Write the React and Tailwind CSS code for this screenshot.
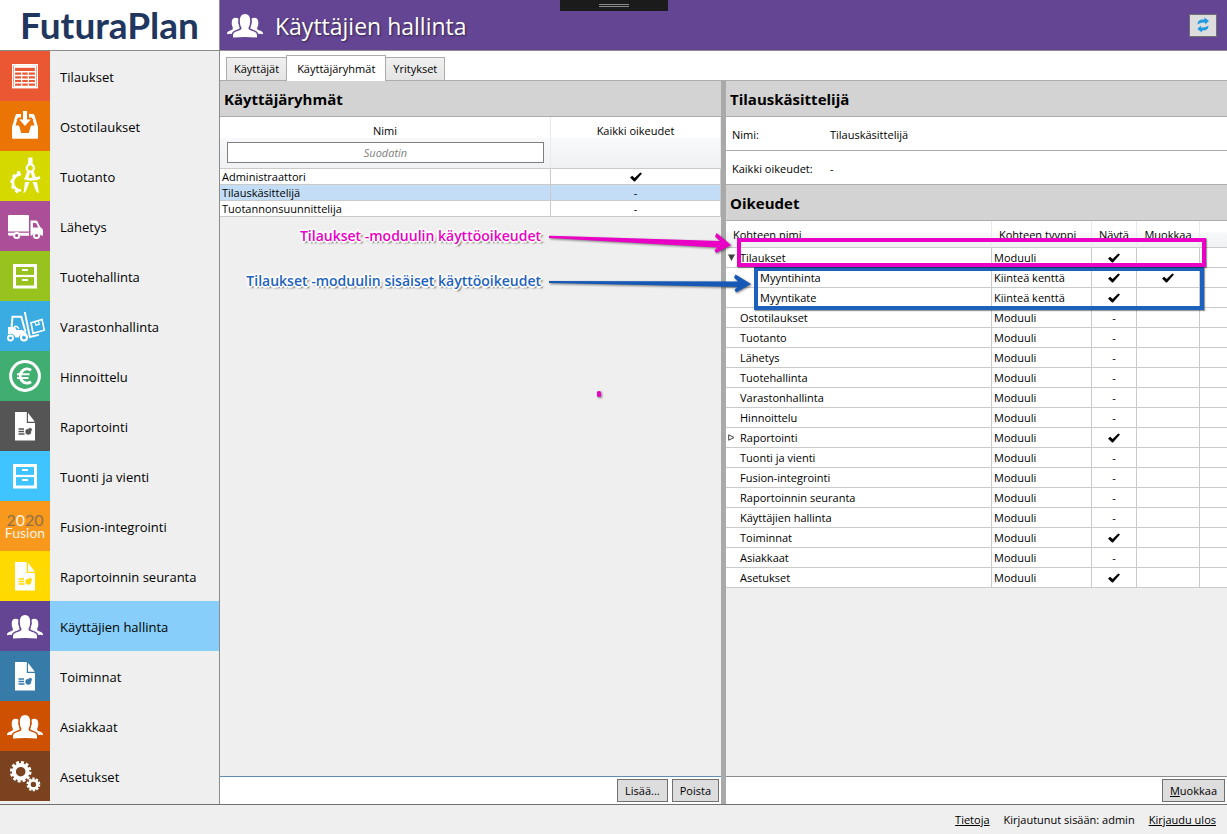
import React from "react";

const Side = "M7 34.200q-.3-2.200 1.500-3l3.500-1.400q1.200-.6.800-2q-1.300-2-1.100-5.300q.1-4.800 3.800-4.800q1.800 0 3 1q-.9 4 .8 7.800q.8 1.800-.2 2.600l-4 1.800q-2.800 1.200-3.600 3.100q-2.300-.4-4.500.2z";

const People = () => (
  <g fill="#fff">
    <path d={Side} />
    <path transform="matrix(-1 0 0 1 50 0)" d={Side} />
    <path
      d="M13 37.500v-2.500q0-2.400 2.500-3.300l4.700-1.800q1.700-.7 1.200-2.300q-1.600-2.400-1.600-6.600q0-7 5.200-7t5.200 7q0 4.200-1.600 6.600q-.5 1.600 1.200 2.300l4.700 1.800q2.500.9 2.500 3.300v2.500q-12-1-24 0z"
      stroke="currentColor"
      strokeWidth="2.400"
      paintOrder="stroke"
    />
  </g>
);

const Cabinet = () => (
  <g>
    <rect x="14.500" y="14.500" width="21" height="21.500" fill="none" stroke="#fff" strokeWidth="3" />
    <path d="M14 25h22" stroke="#fff" strokeWidth="2.200" />
    <path d="M22 19h6M22 29h6" stroke="#fff" strokeWidth="2" />
  </g>
);

const Report = () => (
  <g>
    <path d="M15 11h11.800v11H35v17.500H15z" fill="#fff" />
    <path d="M28 11.800l6.800 9H28z" fill="#fff" />
    <g stroke="currentColor" fill="currentColor">
      <path d="M18.500 28h5.500M18.500 30.500h5.500M18.500 33h6" strokeWidth="1.300" />
      <circle cx="28.300" cy="30.800" r="2.700" strokeWidth="0.500" />
      <path d="M29.400 29.300V27a2.600 2.600 0 0 1 2.600 2.300z" strokeWidth="0.600" />
    </g>
  </g>
);

const Grid = () => (
  <g>
    <rect x="12.700" y="13.700" width="24.600" height="23" fill="none" stroke="#fff" strokeWidth="1.400" />
    <path d="M14 20.700h22M14 24.500h22M14 28.200h22M14 31.800h22M14 35.500h22" stroke="#fff" strokeWidth="1.400" />
    <path d="M14.500 15v21M21.700 20v16M28.300 20v16M35.500 15v21" stroke="#fff" strokeWidth="1.200" />
    <path d="M14 15.500h22" stroke="#fff" strokeWidth="2.600" />
  </g>
);

const Inbox = () => (
  <g>
    <path d="M17 13h16q1 0 1.400 1L38 26v10.500q0 1.200-1.200 1.200H13.200q-1.200 0-1.200-1.200V26l3.600-12q.4-1 1.400-1z" fill="#fff" />
    <path d="M18 16.500h14l2.500 8H31L28.800 32h-7.600L19 24.500h-3.500z" fill="currentColor" />
    <path d="M21 12h8v6h4.500L25 27l-8.500-9H21z" fill="currentColor" />
    <path d="M23 10h4v8.500h3.800L25 25l-5.800-6.500H23z" fill="#fff" />
  </g>
);

const Compass = () => (
  <g fill="none" stroke="#fff">
    <path d="M21 23.200a8.200 8.200 0 0 0 0 16.400" strokeWidth="2.800" />
    <path d="M20 21a10.700 10.700 0 0 0 0 20.800" strokeWidth="2.800" strokeDasharray="3.100 2.700" />
    <rect x="28.800" y="7" width="3.200" height="3.300" fill="#fff" />
    <path d="M30.300 10v3" strokeWidth="4.500" />
    <circle cx="30.300" cy="17" r="3.600" strokeWidth="2.200" />
    <path d="M28.600 20.500L26.600 27.500M32 20.500l2.500 7" strokeWidth="3.300" />
    <path d="M24.500 27q7 3 15.500-.5" strokeWidth="2.600" />
    <path d="M25 31h4.500l-3.500 9-2.500 2.500zM32.500 31H37l2 11.500-3-2.500z" fill="#fff" stroke="none" />
  </g>
);

const Truck = () => (
  <g>
    <path d="M8 15q0-1 1-1h19q1 0 1 1v15.500H8zM8 31.700h21v3h-8.200a4.600 4.600 0 0 0-8.200 0H10q-2 0-2-1.500z" fill="#fff" />
    <path fillRule="evenodd" d="M30.500 19.500h5.500q1 0 1.500 1l2.700 5.500q2.800 1.500 2.800 3.500v5h-2.300a4.600 4.600 0 0 0-8.600 0h-1.600zM33 22v4.500h5.300L36 22z" fill="#fff" />
    <circle cx="16.700" cy="34.500" r="2.600" fill="none" stroke="#fff" strokeWidth="2" />
    <circle cx="36.500" cy="34.500" r="2.600" fill="none" stroke="#fff" strokeWidth="2" />
  </g>
);

const Forklift = () => (
  <g fill="none" stroke="#fff">
    <path d="M8 26h7l1.500 3h6l4 3v3.500h-1.500q-4-4.500-6.500 1h-3q-2.500-5.500-7.500-3z" fill="#fff" stroke="none" />
    <path d="M11.500 27l1-11.300h8.800l4.200 15" strokeWidth="2" />
    <path d="M14 25.500h3l2 2.500" strokeWidth="1.500" />
    <circle cx="10.500" cy="37" r="2.500" strokeWidth="1.800" />
    <circle cx="24" cy="36.500" r="3" strokeWidth="2.200" />
    <path d="M24.800 11l5 25 9-2.200" strokeWidth="1.900" />
    <path d="M31 21.700l11-3.300 2.300 10.800-11.300 3z" strokeWidth="1.600" />
    <path d="M35 21l1 3.200 3.200-.9-.8-3.300" strokeWidth="1.200" />
  </g>
);

const Euro = () => (
  <g fill="none" stroke="#fff">
    <circle cx="25" cy="25" r="14.400" strokeWidth="3" />
    <path d="M31 19.300a6.800 7 0 1 0 0 11.400" strokeWidth="3" />
    <path d="M17 23.300h12.500M17 27h11.500" strokeWidth="2" />
  </g>
);

const Gears = () => (
  <g fill="none" stroke="#fff">
    <circle cx="20.700" cy="20.700" r="6.800" strokeWidth="4" />
    <circle cx="20.700" cy="20.700" r="9.400" strokeWidth="2.800" strokeDasharray="2.950 1.970" />
    <circle cx="33.400" cy="33.400" r="4.100" strokeWidth="2.800" />
    <circle cx="33.400" cy="33.400" r="5.900" strokeWidth="2" strokeDasharray="2.300 1.407" />
  </g>
);

const modules = [
  { name: "Tilaukset", Art: Grid, tile: "bg-[#e95832] text-[#e95832]" },
  { name: "Ostotilaukset", Art: Inbox, tile: "bg-[#ea7404] text-[#ea7404]" },
  { name: "Tuotanto", Art: Compass, tile: "bg-[#d6d900] text-[#d6d900]" },
  { name: "Lähetys", Art: Truck, tile: "bg-[#aa4f98] text-[#aa4f98]" },
  { name: "Tuotehallinta", Art: Cabinet, tile: "bg-[#98c21d] text-[#98c21d]" },
  { name: "Varastonhallinta", Art: Forklift, tile: "bg-[#3aace2] text-[#3aace2]" },
  { name: "Hinnoittelu", Art: Euro, tile: "bg-[#3fae70] text-[#3fae70]" },
  { name: "Raportointi", Art: Report, tile: "bg-[#555555] text-[#555555]" },
  { name: "Tuonti ja vienti", Art: Cabinet, tile: "bg-[#40c4ff] text-[#40c4ff]" },
  { name: "Fusion-integrointi", tile: "bg-[#f8981d]" },
  { name: "Raportoinnin seuranta", Art: Report, tile: "bg-[#ffd900] text-[#ffd900]" },
  { name: "Käyttäjien hallinta", Art: People, tile: "bg-[#634593] text-[#634593]", active: true },
  { name: "Toiminnat", Art: Report, tile: "bg-[#377ca8] text-[#377ca8]" },
  { name: "Asiakkaat", Art: People, tile: "bg-[#cd5100] text-[#cd5100]" },
  { name: "Asetukset", Art: Gears, tile: "bg-[#7a421e] text-[#7a421e]" },
];

const groups = [
  { name: "Administraattori", all: true },
  { name: "Tilauskäsittelijä", selected: true },
  { name: "Tuotannonsuunnittelija" },
];

const rights = [
  { name: "Tilaukset", type: "Moduuli", view: "yes", open: true },
  { name: "Myyntihinta", type: "Kiinteä kenttä", view: "yes", edit: "yes", child: true },
  { name: "Myyntikate", type: "Kiinteä kenttä", view: "yes", child: true },
  { name: "Ostotilaukset", type: "Moduuli", view: "no" },
  { name: "Tuotanto", type: "Moduuli", view: "no" },
  { name: "Lähetys", type: "Moduuli", view: "no" },
  { name: "Tuotehallinta", type: "Moduuli", view: "no" },
  { name: "Varastonhallinta", type: "Moduuli", view: "no" },
  { name: "Hinnoittelu", type: "Moduuli", view: "no" },
  { name: "Raportointi", type: "Moduuli", view: "yes", closed: true },
  { name: "Tuonti ja vienti", type: "Moduuli", view: "no" },
  { name: "Fusion-integrointi", type: "Moduuli", view: "no" },
  { name: "Raportoinnin seuranta", type: "Moduuli", view: "no" },
  { name: "Käyttäjien hallinta", type: "Moduuli", view: "no" },
  { name: "Toiminnat", type: "Moduuli", view: "yes" },
  { name: "Asiakkaat", type: "Moduuli", view: "no" },
  { name: "Asetukset", type: "Moduuli", view: "yes" },
];

const Check = () => (
  <svg viewBox="0 0 12 10" className="mb-[2px] inline-block h-[10px] w-[12px] align-middle" role="img" aria-label="Kyllä">
    <path d="M0 5.500L2.200 3.800L4.600 6L10.300.5L12 1.500L5 9.500H4z" fill="#000" />
  </svg>
);

const Mark = ({ value }) => (value === "yes" ? <Check /> : value === "no" ? "-" : null);

const Tab = ({ children, active }) => (
  <button
    type="button"
    role="tab"
    aria-selected={Boolean(active)}
    className={
      active
        ? "relative z-10 -mx-px h-[26px] border border-b-0 border-[#acacac] bg-white px-[10px] pb-px"
        : "h-6 border border-[#acacac] bg-linear-to-b from-[#f0f0f0] to-[#e5e5e5] px-[7px] pb-px"
    }
  >
    {children}
  </button>
);

const Heading = ({ children }) => (
  <h2 className="flex h-9 shrink-0 items-center border-b border-[#acacac] bg-[#d3d3d3] px-1 pt-px text-[15px] font-bold">
    {children}
  </h2>
);

const Action = ({ children }) => (
  <button type="button" className="h-[23px] border border-[#707070] bg-[#dddddd] px-[7px]">
    {children}
  </button>
);

const cell = "border-r border-b border-[#cacaca] p-0 whitespace-nowrap";
const headCell = "border-r border-r-[#e9eaec] p-0 font-normal whitespace-nowrap";

function GroupTable() {
  return (
    <table className="w-full table-fixed border-separate border-spacing-0 bg-white">
      <colgroup>
        <col className="w-[331px]" />
        <col />
      </colgroup>
      <thead>
        <tr className="h-[21px]">
          <th className={`${headCell} pt-[6px]`}>Nimi</th>
          <th className={`${headCell} pt-[6px]`}>Kaikki oikeudet</th>
        </tr>
        <tr className="h-[31px] bg-linear-to-b from-[#f8f9fa] to-[#f0f1f3]">
          <td className="border-r border-b border-r-[#e9eaec] border-b-[#cacaca] p-0 pr-[6px] pb-px pl-[7px]">
            <input
              type="text"
              aria-label="Suodatin"
              placeholder="Suodatin"
              className="block h-[21px] w-full border border-[#7f7f7f] bg-white text-center placeholder:text-[#808080] placeholder:italic"
            />
          </td>
          <td className="border-r border-b border-r-[#e9eaec] border-b-[#cacaca] p-0" />
        </tr>
      </thead>
      <tbody>
        {groups.map((g) => (
          <tr key={g.name} className={g.selected ? "h-4 bg-[#c3ddf6]" : "h-4"}>
            <td className={`${cell} pl-[2px]`}>{g.name}</td>
            <td className={`${cell} text-center`}>
              <Mark value={g.all ? "yes" : "no"} />
            </td>
          </tr>
        ))}
      </tbody>
    </table>
  );
}

function RightsTable() {
  return (
    <div className="relative">
      <table className="w-full table-fixed border-separate border-spacing-0 bg-white leading-[15px]">
        <colgroup>
          <col className="w-[266px]" />
          <col className="w-[100px]" />
          <col className="w-[45px]" />
          <col className="w-[63px]" />
          <col />
        </colgroup>
        <thead>
          <tr className="h-[27px] bg-linear-to-b from-white from-40% via-[#f7f8fa] via-45% to-[#f0f1f3]">
            <th className={`${headCell} border-b border-b-[#cacaca] pl-[7px] text-left`}>Kohteen nimi</th>
            <th className={`${headCell} border-b border-b-[#cacaca] pl-[7px] text-left`}>Kohteen tyyppi</th>
            <th className={`${headCell} border-b border-b-[#cacaca]`}>Näytä</th>
            <th className={`${headCell} border-b border-b-[#cacaca]`}>Muokkaa</th>
            <td className="border-b border-[#cacaca] p-0" />
          </tr>
        </thead>
        <tbody>
          {rights.map((r) => (
            <tr key={r.name} className="h-5">
              <td className={cell}>
                <div className={r.child ? "flex items-center pl-[34px]" : "flex items-center"}>
                  {!r.child && (
                    <span className="flex w-[14px] shrink-0 pl-[2px]">
                      {r.open && (
                        <svg viewBox="0 0 7 7" className="h-[7px] w-[7px]">
                          <path d="M0 .5h7L3.500 7z" fill="#404040" />
                        </svg>
                      )}
                      {r.closed && (
                        <svg viewBox="0 0 7 7" className="h-[7px] w-[7px]">
                          <path d="M.7.800L6 3.500L.7 6.200z" fill="none" stroke="#404040" />
                        </svg>
                      )}
                    </span>
                  )}
                  {r.name}
                </div>
              </td>
              <td className={`${cell} pl-[2px]`}>{r.type}</td>
              <td className={`${cell} text-center`}>
                <Mark value={r.view} />
              </td>
              <td className={`${cell} text-center`}>
                <Mark value={r.edit} />
              </td>
              <td className="border-b border-[#cacaca] p-0" />
            </tr>
          ))}
        </tbody>
      </table>
      <div className="pointer-events-none absolute top-[46px] left-7 h-[43px] w-[450px] border-4 border-[#1c62bd] shadow-[1px_1px_1px_rgba(0,0,0,0.4)]" />
      <div className="pointer-events-none absolute top-[17px] left-[11px] h-[29px] w-[469px] border-4 border-[#ea00c4] shadow-[1px_1px_1px_rgba(0,0,0,0.4)]" />
    </div>
  );
}

const note =
  "absolute left-0 w-[321px] text-right text-[14px] leading-5 font-semibold whitespace-nowrap [text-shadow:-1px_-1px_0_#fff,1px_-1px_0_#fff,-1px_1px_0_#fff,1px_1px_0_#fff,0_2px_0_#fff,2px_0_0_#fff,-2px_0_0_#fff,0_-2px_0_#fff,2px_2px_2px_rgba(0,0,0,0.7)]";

function Notes() {
  return (
    <div className="pointer-events-none absolute inset-0">
      <p className={`${note} top-[145px] text-[#ea00c4]`}>Tilaukset -moduulin käyttöoikeudet</p>
      <p className={`${note} top-[190px] text-[#1c62bd]`}>Tilaukset -moduulin sisäiset käyttöoikeudet</p>
      <svg
        viewBox="0 0 210 180"
        className="absolute top-[140px] left-[326px] h-[180px] w-[210px] drop-shadow-[1px_1px_1px_rgba(0,0,0,0.5)]"
      >
        <path d="M3 15l1-.2 170 5.200-5-4.500 1.500-3.500L185 24l-15 8-1.500-3 3-2.500L3 17z" fill="#ea00c4" />
        <path d="M3 60l189 .5-4-4 1.500-3L205 63l-15 8.500-1.500-3 3-2.500L3 62z" fill="#1558b5" />
        <rect x="51" y="170" width="4" height="6" rx="1.500" fill="#ea00c4" />
      </svg>
    </div>
  );
}

export default function App() {
  return (
    <div className="flex min-h-screen flex-col bg-[#efefef] font-['Open_Sans','Noto_Sans',sans-serif] text-[11px] leading-[15px] text-black">
      <div className="flex flex-1">
        <aside className="flex w-[220px] shrink-0 flex-col border-r border-[#8c8c8c]">
          <div className="flex h-[51px] items-center justify-center border-b border-[#8c8c8c] bg-white font-['Lato',sans-serif] text-[37px] leading-[50px] font-bold text-[#1f365f]">
            FuturaPlan
          </div>
          <nav className="flex flex-col pb-[3px]">
            {modules.map(({ name, Art, tile, active }) => (
              <a
                key={name}
                href="#"
                className={`flex h-[50px] items-center text-[13px] ${active ? "bg-[#87cefa]" : ""}`}
              >
                <span className={`mr-[10px] flex h-[50px] w-[50px] flex-col items-center justify-center ${tile}`}>
                  {Art ? (
                    <svg viewBox="0 0 50 50" className="h-[50px] w-[50px]" aria-hidden="true">
                      <Art />
                    </svg>
                  ) : (
                    <>
                      <span className="font-['Lato'] text-[16px] leading-[13px] text-[#8f7048]">
                        2<span className="text-[#fff3e0]">0</span>20
                      </span>
                      <span className="font-['Lato'] text-[14px] leading-[13px] text-[#fff3e0]">Fusion</span>
                    </>
                  )}
                </span>
                <span className="pt-[2px]">{name}</span>
              </a>
            ))}
          </nav>
        </aside>

        <main className="flex min-w-0 flex-1 flex-col">
          <header className="relative flex h-[51px] shrink-0 items-center border-b border-[#8c8c8c] bg-[#634593]">
            <svg viewBox="0 0 50 50" className="h-[50px] w-[50px] text-[#634593]" aria-hidden="true">
              <People />
            </svg>
            <h1 className="pt-px pl-[5px] text-[23px] leading-[32px] text-white [text-shadow:1px_1px_2px_rgba(0,0,0,0.5)]">
              Käyttäjien hallinta
            </h1>
            <button
              type="button"
              aria-label="Päivitä"
              className="mr-[10px] ml-auto flex h-[23px] w-7 items-center justify-center border border-[#707070] bg-[#dddddd]"
            >
              <svg viewBox="0 0 12 16" className="h-4 w-3">
                <path d="M.5 7.500Q.5 2.500 6 2.500H7.500V.5L12 4L8 7.500V5.500H6.500Q3 5.500.5 7.500z" fill="#1f9ae0" />
                <path d="M11.500 8.500Q11.500 13.500 6 13.500H5V15.500L.3 12L4 8.500V10.500H5.500Q9 10.500 11.500 8.500z" fill="#1f9ae0" />
              </svg>
            </button>
            <div className="absolute top-0 left-[340px] flex h-[11px] w-[108px] flex-col items-center justify-center gap-px bg-[#1b1b1b]">
              <span className="h-px w-[30px] bg-[#8a8a8a]" />
              <span className="h-px w-[30px] bg-[#8a8a8a]" />
            </div>
          </header>

          <div role="tablist" className="flex h-[30px] shrink-0 items-end bg-white pl-[6px] shadow-[inset_0_-1px_0_#acacac]">
            <Tab>Käyttäjät</Tab>
            <Tab active>Käyttäjäryhmät</Tab>
            <Tab>Yritykset</Tab>
          </div>

          <div className="relative flex flex-1">
            <section className="flex w-[501px] shrink-0 flex-col">
              <Heading>Käyttäjäryhmät</Heading>
              <GroupTable />
              <div className="mt-auto flex h-7 items-center justify-end gap-1 border-t border-[#5f8db8] bg-white pr-[2px]">
                <Action>Lisää...</Action>
                <Action>Poista</Action>
              </div>
            </section>
            <div className="w-[5px] shrink-0 bg-[#a9a9a9]" />
            <section className="flex min-w-0 flex-1 flex-col">
              <Heading>Tilauskäsittelijä</Heading>
              <dl className="bg-white">
                <div className="flex h-[34px] items-center border-b border-[#acacac] px-[6px] pt-[2px]">
                  <dt className="w-[98px]">Nimi:</dt>
                  <dd>Tilauskäsittelijä</dd>
                </div>
                <div className="flex h-[34px] items-center border-b border-[#acacac] px-[6px] pt-[2px]">
                  <dt className="w-[98px]">Kaikki oikeudet:</dt>
                  <dd>-</dd>
                </div>
              </dl>
              <Heading>Oikeudet</Heading>
              <RightsTable />
              <div className="mt-auto flex h-7 items-center justify-end border-t border-[#8c8c8c] bg-white pr-[2px]">
                <Action>
                  <span className="underline">M</span>uokkaa
                </Action>
              </div>
            </section>
            <Notes />
          </div>
        </main>
      </div>

      <footer className="flex h-[30px] shrink-0 items-center justify-end gap-[14px] border-t border-[#707070] pr-[11px]">
        <a href="#" className="underline">
          Tietoja
        </a>
        <span>Kirjautunut sisään: admin</span>
        <a href="#" className="underline">
          Kirjaudu ulos
        </a>
      </footer>
    </div>
  );
}
